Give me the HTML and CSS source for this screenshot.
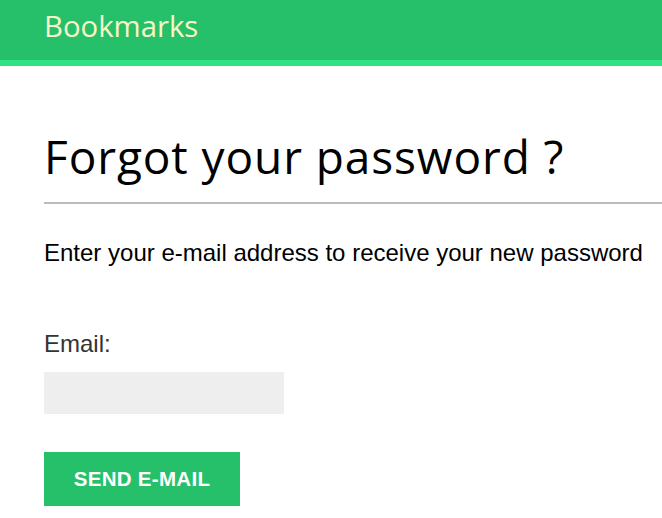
FILE: index.html
```html
<!DOCTYPE html>
<html>
<head>
<meta charset="utf-8">
<link rel="stylesheet" href="styles.css">
</head>
<body>
<header class="topbar">
  <span class="brand">Bookmarks</span>
</header>
<main class="content">
  <h1 class="title">Forgot your password ?</h1>
  <hr class="divider">
  <p class="lead">Enter your e-mail address to receive your new password</p>
  <form class="form">
    <label class="label" for="email">Email:</label>
    <input class="input" id="email" type="text">
    <button class="btn" type="button">SEND E-MAIL</button>
  </form>
</main>
</body>
</html>
```

FILE: styles.css
```css
html, body {
  margin: 0;
  padding: 0;
  background: #fff;
}
body {
  font-family: "Liberation Sans", Arial, sans-serif;
  overflow: hidden;
}
.topbar {
  height: 60px;
  background: #26c06a;
  border-bottom: 6px solid #2ee182;
  display: flex;
  align-items: flex-start;
  padding-left: 44px;
}
.brand {
  font-family: "Open Sans", sans-serif;
  font-size: 29.3px;
  line-height: 30px;
  color: #f7f6c6;
  margin-top: 11px;
}
.content {
  padding-left: 44px;
}
.title {
  font-family: "Open Sans", sans-serif;
  font-weight: 400;
  font-size: 46px;
  line-height: 56px;
  letter-spacing: 0.9px;
  color: #000;
  margin: 62px 0 0 0;
}
.divider {
  border: 0;
  border-top: 2px solid #bbb;
  margin: 18px 0 0 0;
}
.lead {
  font-size: 24px;
  line-height: 28px;
  color: #000;
  margin: 35px 0 0 0;
}
.form {
  display: flex;
  flex-direction: column;
  align-items: flex-start;
}
.label {
  font-size: 24px;
  line-height: 28px;
  color: #333;
  margin-top: 63px;
}
.input {
  width: 240px;
  height: 42px;
  box-sizing: border-box;
  background: #eee;
  border: 0;
  margin: 14px 0 0 0;
  padding: 0 10px;
}
.btn {
  margin-top: 38px;
  width: 196px;
  height: 54px;
  background: #26c06a;
  border: 0;
  color: #fff;
  font-family: "Liberation Sans", Arial, sans-serif;
  font-weight: 700;
  font-size: 20.5px;
  letter-spacing: 0.3px;
  padding: 0;
}
```
